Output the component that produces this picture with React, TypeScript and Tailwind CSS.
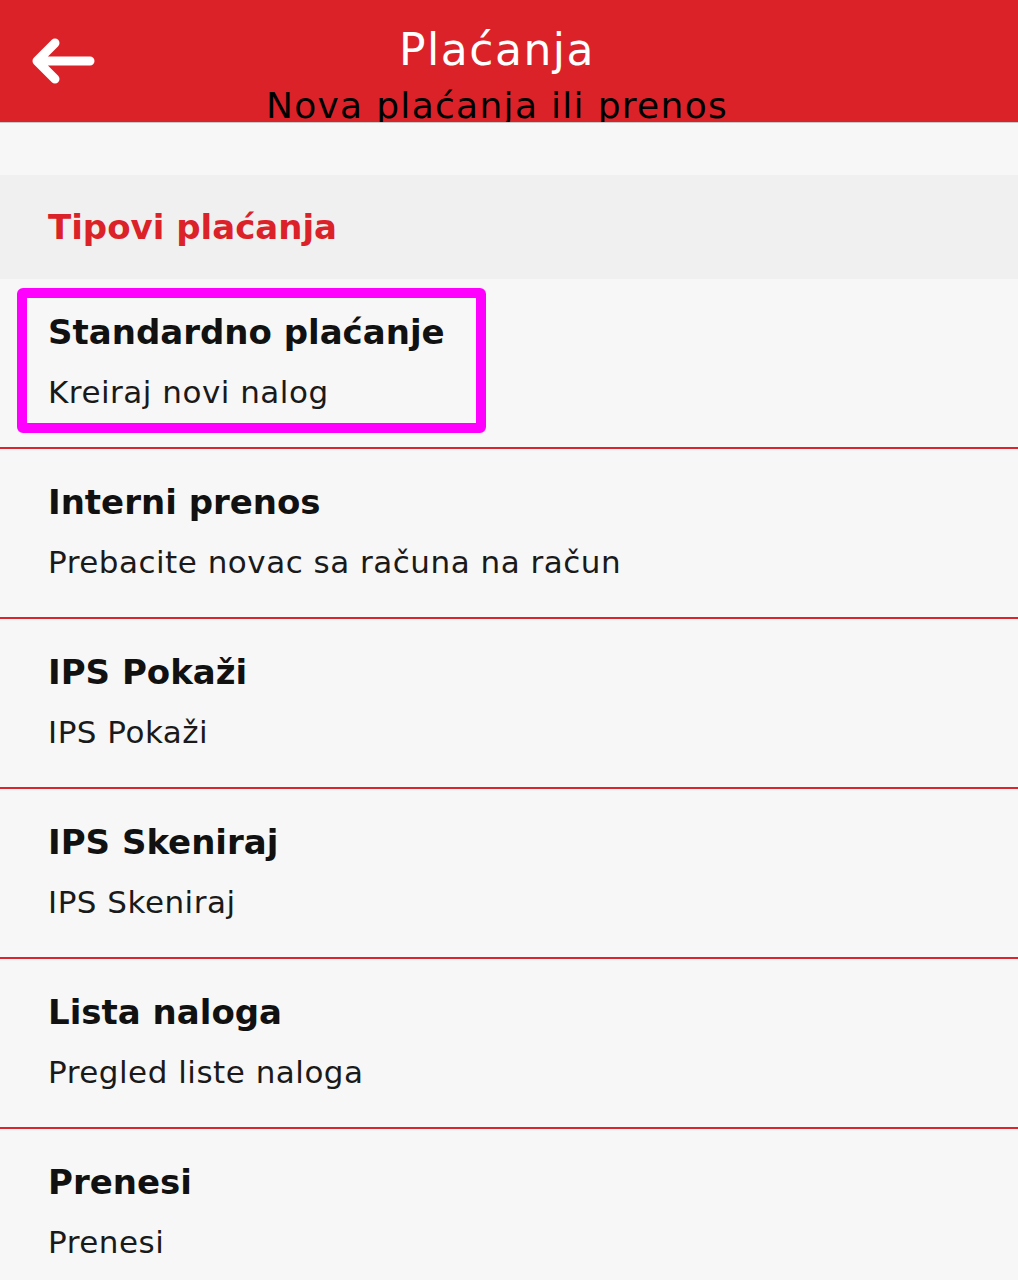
import { ReactNode } from "react";

const font = { fontFamily: "'DejaVu Sans', 'Noto Sans', sans-serif" };

function BackArrow() {
  return (
    <svg width="66" height="48" viewBox="0 0 66 48" fill="none">
      <path
        d="M60 24 H7 M25 6 L7 24 L25 42"
        stroke="#ffffff"
        strokeWidth="9"
        strokeLinecap="round"
        strokeLinejoin="round"
      />
    </svg>
  );
}

function Row({ title, sub, children }: { title: string; sub: string; children?: ReactNode }) {
  return (
    <div className="relative h-[170px] border-b-2 border-[#d9262e] px-[48px] pt-[30px]">
      {children}
      <p className="text-[34px] leading-[46px] font-bold text-[#111111]">{title}</p>
      <p className="mt-[14px] text-[31px] leading-[46px] tracking-[0.5px] text-[#1a1a1a]">{sub}</p>
    </div>
  );
}

export default function App() {
  return (
    <div className="w-[1018px] h-[1280px] overflow-hidden bg-[#f7f7f7]" style={font}>
      <header className="relative h-[123px] bg-[#dc2229] overflow-hidden flex flex-col items-center pr-[24px] border-b border-[#c9c9c9]">
        <div className="absolute left-[30px] top-[37px]">
          <BackArrow />
        </div>
        <h1 className="mt-[22px] text-[44px] leading-[56px] tracking-[1.5px] text-white">Plaćanja</h1>
        <p className="mt-[6px] text-[36px] leading-[44px] tracking-[1.3px] text-black">Nova plaćanja ili prenos</p>
      </header>

      <div className="h-[52px]" />

      <div className="h-[104px] bg-[#f0f0f0] px-[48px] flex items-center">
        <h2 className="text-[34px] font-bold text-[#dc2229]">Tipovi plaćanja</h2>
      </div>

      <Row title="Standardno plaćanje" sub="Kreiraj novi nalog">
        <div className="absolute left-[17px] top-[9px] w-[469px] h-[145px] border-[10px] border-[#ff00ff] rounded-[6px]" />
      </Row>
      <Row title="Interni prenos" sub="Prebacite novac sa računa na račun" />
      <Row title="IPS Pokaži" sub="IPS Pokaži" />
      <Row title="IPS Skeniraj" sub="IPS Skeniraj" />
      <Row title="Lista naloga" sub="Pregled liste naloga" />
      <Row title="Prenesi" sub="Prenesi" />
    </div>
  );
}
